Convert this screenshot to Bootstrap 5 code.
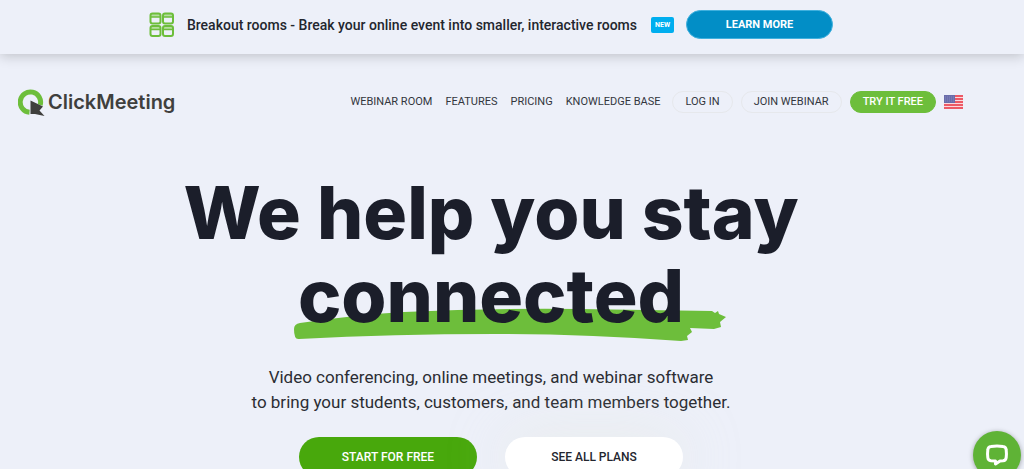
<!DOCTYPE html>
<html lang="en">
<head>
<meta charset="utf-8">
<meta name="viewport" content="width=device-width, initial-scale=1">
<title>ClickMeeting</title>
<link href="https://cdn.jsdelivr.net/npm/bootstrap@5.3.0/dist/css/bootstrap.min.css" rel="stylesheet">
<style>
body{background:#edf0f9;color:#2b2d33;font-family:Roboto,"Liberation Sans",sans-serif;line-height:24px}
.page-inner{padding-right:42px}
.promo{background:#edf0f9;box-shadow:0 2px 12px rgba(0,0,0,.2);height:54px;padding-bottom:5px}
.promo-text{font-size:14px;font-weight:500;color:#23262e;margin:0 14px 0 12px}
.new-tag{background:#00aeef;font-size:7px;line-height:16px;padding:0 4px;border-radius:2px;font-weight:700;margin-right:12px}
.btn{border-radius:50px;line-height:20px;text-transform:uppercase}
.btn-learn{--bs-btn-color:#fff;--bs-btn-bg:#028ec6;--bs-btn-border-color:#3fb0de;--bs-btn-hover-color:#fff;--bs-btn-hover-bg:#027aab;width:147px;height:29px;font-size:11px;font-weight:700;padding:0}
.site-nav{padding:31px 19px 0 18px}
.logo-text{font:600 20px/30px Inter,sans-serif;color:#3f3f3d}
.menu a{font-size:11px;color:#33363d;text-decoration:none}
.menu{gap:13px}
.btn-menu{--bs-btn-color:#33363d;--bs-btn-border-color:#e6e8ec;--bs-btn-hover-bg:#fff;font-size:11px;padding:0 12px}
.btn.btn-try{--bs-btn-bg:#6dbe3b;--bs-btn-border-color:#6dbe3b;--bs-btn-hover-bg:#5aa92b;--bs-btn-color:#fff;color:#fff;font-weight:500}
h1{font:800 73px/83px Inter,sans-serif;color:#1b1e2a;margin:0}
.hero{margin-top:52px}
.underlined{isolation:isolate}
.stroke{left:-4px;bottom:-4px;width:432px;z-index:-1}
.intro{font-size:17px;line-height:25px;margin:28px 0 22px}
.hero-actions{gap:28px}
.btn-hero{width:178px;height:40px;font-size:12px;font-weight:500;border:0}
.btn-start{--bs-btn-color:#fff;--bs-btn-bg:#48a80c;--bs-btn-hover-color:#fff;--bs-btn-hover-bg:#3c900a}
.btn-plans{--bs-btn-color:#23262e;--bs-btn-bg:#fff;--bs-btn-hover-bg:#f5f5f5;box-shadow:0 0 60px rgba(225,230,210,.35)}
.chat{width:48px;height:48px;right:3px;bottom:-10px;background:#5fb336;box-shadow:0 1px 5px rgba(0,0,0,.35)}
</style>
</head>
<body>
<aside class="promo d-flex align-items-center justify-content-center page-inner">
  <svg width="26" height="26" viewBox="0 0 26 26" fill="none" stroke="#6dbe3b" stroke-width="2" aria-hidden="true"><g id="room"><path d="M2 2h9v3H2z" fill="#b5dda0" stroke="none"/><rect x="1.500" y="1.500" width="10" height="10" rx="2"/><path d="M2 5h9" stroke-width="1.500"/></g><use href="#room" x="12.500"/><use href="#room" y="12.500"/><use href="#room" x="12.500" y="12.500"/></svg>
  <span class="promo-text text-nowrap">Breakout rooms - Break your online event into smaller, interactive rooms</span>
  <span class="new-tag text-white">NEW</span>
  <button type="button" class="btn btn-learn">Learn more</button>
</aside>
<header class="page-inner">
  <nav class="site-nav d-flex align-items-center justify-content-between">
    <a href="#" class="d-flex align-items-center text-decoration-none" aria-label="ClickMeeting home">
      <svg width="30" height="34" viewBox="0 0 30 34" aria-hidden="true"><path d="M11.500 27.300A10.200 10.200 0 1 1 22.200 20" fill="none" stroke="#6dbe3b" stroke-width="5"/><path d="M12.500 15.500l12.500 6-3.500 4 5 5.500-9.500-2-4.500 0z" fill="#3f3f3d"/></svg>
      <span class="logo-text">ClickMeeting</span>
    </a>
    <div class="d-flex align-items-center text-nowrap">
      <div class="menu d-flex"><a href="#">WEBINAR ROOM</a><a href="#">FEATURES</a><a href="#">PRICING</a><a href="#">KNOWLEDGE BASE</a></div>
      <div class="d-flex gap-2 ps-2 ms-1 align-items-center">
        <button type="button" class="btn btn-menu">Log in</button>
        <button type="button" class="btn btn-menu">Join webinar</button>
        <button type="button" class="btn btn-menu btn-try">Try it free</button>
        <svg width="19" height="14" viewBox="0 0 19 14" role="img" aria-label="United States"><path fill="#fbd9dd" d="M0 0h19v14H0z"/><path d="M0 1h19M0 4h19M0 7h19M0 10h19M0 13h19" stroke="#e8303f" stroke-width="1.600"/><path fill="#6a6dab" d="M0 0h11v8H0z"/><path d="M1 2h9M1 4h9M1 6h9" stroke="#9093c4" stroke-width=".7" stroke-dasharray="1 1"/></svg>
      </div>
    </div>
  </nav>
</header>
<main class="hero page-inner text-center">
  <h1>We help you stay<br><span class="underlined position-relative d-inline-block">connected
    <svg class="stroke position-absolute" height="34" viewBox="0 0 432 34" preserveAspectRatio="none" aria-hidden="true"><path fill="#6dbe3b" d="M6 16Q60 8 110 5 200 1 285 2L418 4l3 2 3-2 1 3 7 3-6 5 1 5-7 2-24-1 2 4-5 4 1 4-7 1Q290 27 200 27 100 27 5 32 0 33 0 22 0 17 6 16Z"/></svg></span></h1>
  <p class="intro">Video conferencing, online meetings, and webinar software<br>to bring your students, customers, and team members together.</p>
  <div class="hero-actions d-flex justify-content-center">
    <button type="button" class="btn btn-hero btn-start">Start for free</button>
    <button type="button" class="btn btn-hero btn-plans">See all plans</button>
  </div>
</main>
<button type="button" class="chat position-fixed border-0 rounded-circle p-0 d-flex align-items-center justify-content-center" aria-label="Open chat">
  <svg width="26" height="26" viewBox="0 0 26 26" fill="none" stroke="#fff" stroke-width="3" stroke-linejoin="round" aria-hidden="true"><path d="M7 4.500Q13 3.500 19 4.500q3 .3 3.200 3.500.5 4 0 7.500-.3 3-3.200 3.300l-3 .2-4.500 3v-3L7 18.800q-3-.3-3.200-3.300-.5-3.500 0-7.500Q4 4.800 7 4.500z"/></svg>
</button>
<script src="https://cdn.jsdelivr.net/npm/bootstrap@5.3.0/dist/js/bootstrap.bundle.min.js"></script>
</body>
</html>
